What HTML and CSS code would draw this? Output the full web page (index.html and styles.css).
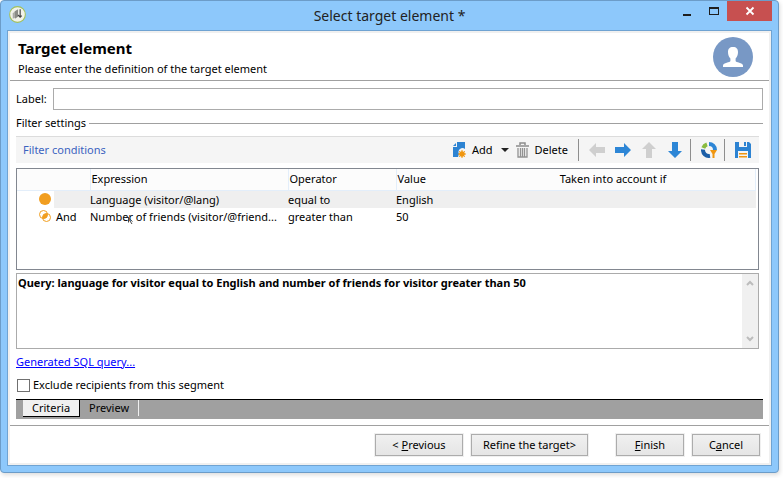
FILE: index.html
```html
<!DOCTYPE html>
<html lang="en">
<head>
<meta charset="utf-8">
<title>Select target element</title>
<link rel="stylesheet" href="styles.css">
</head>
<body>
<div class="window">
  <header class="titlebar">
    <svg class="app-icon" viewBox="0 0 16 16" aria-hidden="true">
      <circle cx="8" cy="8" r="7.4" fill="#f1f2ea" stroke="#a3c05a"/>
      <path d="M3.500 12V7l2-2v6z" fill="#a9aaa6"/>
      <path d="M5.500 5l3-2v7l-3 2z" fill="#8a8b86"/>
      <path d="M10.500 3v7.500M8.500 8.500l2 2 1.500-1.500" fill="none" stroke="#444" stroke-width="1.100"/>
    </svg>
    <h1 class="window-title">Select target element *</h1>
    <div class="window-controls">
      <button class="win-btn minimize" aria-label="Minimize"><svg viewBox="0 0 10 10"><path d="M1 8h8v2H1z" fill="#1e1e1e"/></svg></button>
      <button class="win-btn maximize" aria-label="Maximize"><svg viewBox="0 0 10 10"><path d="M0 1h10v8H0zM1 3v5h8V3z" fill="#1e1e1e" fill-rule="evenodd"/></svg></button>
      <button class="win-btn close" aria-label="Close"><svg viewBox="0 0 10 10"><path d="M1.500 1.500l7 7M8.500 1.500l-7 7" stroke="#fff" stroke-width="1.800"/></svg></button>
    </div>
  </header>
  <main class="dialog">
    <section class="intro">
      <div>
        <h2>Target element</h2>
        <p>Please enter the definition of the target element</p>
      </div>
      <svg class="avatar" viewBox="0 0 40 40" aria-hidden="true">
        <circle cx="20" cy="20" r="20" fill="#7898c5"/>
        <path d="M20 10c-3.500 0-5 2-5 5 0 3 .9 5 2.400 6.400v2.600c0 1.400-7.400 1.700-7.400 4.500V30h20v-1.500c0-2.800-7.400-3.100-7.400-4.500v-2.600c1.500-1.400 2.400-3.400 2.400-6.400 0-3-1.500-5-5-5z" fill="#fff"/>
      </svg>
    </section>
    <div class="body">
      <div class="label-row">
        <label for="label">Label:</label>
        <input type="text" id="label">
      </div>
      <div class="group-title"><span>Filter settings</span></div>
      <div class="toolbar">
        <span class="toolbar-title">Filter conditions</span>
        <button class="tool"><svg viewBox="0 0 16 16"><path d="M5 0h8v7a4 4 0 0 0-6 5l-1 3H1V5h4z" fill="#2d83d2"/><path d="M1 4l3-3v3z" fill="#2d83d2"/><circle cx="10" cy="12" r="2.800" fill="#f0960f"/><path d="M10 8v8M6 12h8M7.200 9.200l5.600 5.600M12.800 9.200l-5.600 5.600" stroke="#f0960f"/></svg>Add</button>
        <button class="tool more" aria-label="More add options"><svg viewBox="0 0 8 4"><path d="M0 0h8L4 4z" fill="#222"/></svg></button>
        <button class="tool delete"><svg viewBox="0 0 16 16"><path d="M5 3V1h5v2M1 4h13" fill="none" stroke="#8c8c8c" stroke-width="1.500"/><path d="M3 6v9h9V6M5.500 6v9M7.500 6v9M9.500 6v9" fill="none" stroke="#929292" stroke-width="1.300"/></svg>Delete</button>
        <span class="divider"></span>
        <button class="tool icon" aria-label="Left"><svg viewBox="0 0 16 16"><path d="M0 8l7-7v4h9v6H7v4z" fill="#cfcfcf"/></svg></button>
        <button class="tool icon" aria-label="Right"><svg viewBox="0 0 16 16"><path d="M16 8L9 1v4H0v6h9v4z" fill="#2d86d6"/></svg></button>
        <button class="tool icon" aria-label="Up"><svg viewBox="0 0 16 16"><path d="M8 0l7 7h-4v9H5V7H1z" fill="#cfcfcf"/></svg></button>
        <button class="tool icon" aria-label="Down"><svg viewBox="0 0 16 16"><path d="M8 16l7-7h-4V0H5v9H1z" fill="#2d86d6"/></svg></button>
        <span class="divider"></span>
        <button class="tool icon" aria-label="Distribution"><svg viewBox="0 0 16 16"><g fill="none" stroke-width="4"><path d="M8 2a6 6 0 0 1 6 6" stroke="#2d86d6"/><path d="M2.300 6A6 6 0 0 1 6 2.300" stroke="#89bb40"/><path d="M2 7.500a6 6 0 0 0 7 6.400" stroke="#1c5fa8"/></g><path d="M9 8h7l-2.500 4v4h-2v-4z" fill="#f0960f"/></svg></button>
        <span class="divider"></span>
        <button class="tool icon" aria-label="Save"><svg viewBox="0 0 16 16"><path d="M0 0h4v5h8V0h2l2 2v14h-3V9H3v7H0zM9 0h2v4H9z" fill="#2d83d2"/><path d="M4 11h8v1.500H4zM4 14h8v1.500H4z" fill="#f0960f"/></svg></button>
      </div>
      <div class="conditions">
        <table>
          <colgroup><col class="c-icon"><col class="c-join"><col class="c-expr"><col class="c-op"><col class="c-val"><col></colgroup>
          <thead><tr><th colspan="2"></th><th>Expression</th><th>Operator</th><th>Value</th><th class="center">Taken into account if</th></tr></thead>
          <tbody>
            <tr class="selected"><td class="mark"><svg viewBox="0 0 12 12"><circle cx="6" cy="6" r="6" fill="#f19e20"/></svg></td><td></td><td>Language (visitor/@lang)</td><td>equal to</td><td>English</td><td></td></tr>
            <tr><td class="mark"><svg viewBox="0 0 12 12"><g fill="none" stroke="#f19e20"><circle cx="4.500" cy="4.500" r="4"/><circle cx="7.500" cy="7.500" r="4"/></g><path d="M8.500 3.600A4 4 0 0 1 3.600 8.500 4 4 0 0 1 8.500 3.600z" fill="#f19e20"/></svg></td><td>And</td><td class="pointed">Number of friends (visitor/@friend...<svg class="cursor" viewBox="0 0 5 7" aria-hidden="true"><path d="M.5 0v5.500M.5 1l4 3.500M2 4l2 3" fill="none" stroke="#444"/></svg></td><td>greater than</td><td>50</td><td></td></tr>
          </tbody>
        </table>
      </div>
      <div class="query">
        <p>Query: language for visitor equal to English and number of friends for visitor greater than 50</p>
        <div class="scrollbar">
          <svg viewBox="0 0 8 6"><path d="M1 5l3-3 3 3" fill="none" stroke="#bcbcbc" stroke-width="2"/></svg>
          <svg viewBox="0 0 8 6"><path d="M1 1l3 3 3-3" fill="none" stroke="#bcbcbc" stroke-width="2"/></svg>
        </div>
      </div>
      <a class="sql" href="#sql">Generated SQL query...</a>
      <label class="exclude"><input type="checkbox">Exclude recipients from this segment</label>
      <nav class="tabs">
        <button class="tab active">Criteria</button>
        <button class="tab">Preview</button>
      </nav>
    </div>
    <footer class="actions">
      <button class="btn">&lt; <u>P</u>revious</button>
      <button class="btn wide">Refine the target&gt;</button>
      <button class="btn narrow apart"><u>F</u>inish</button>
      <button class="btn narrow">C<u>a</u>ncel</button>
    </footer>
  </main>
</div>
</body>
</html>
```
FILE: styles.css
```css
* { box-sizing: border-box; }
html, body { height: 100%; }
body {
  margin: 0;
  padding: 0 4px 5px 0;
  background: #fff;
  color: #000;
  font: 11px/16px "Noto Sans", "Open Sans", sans-serif;
}
button, input { font: inherit; color: inherit; }
button { padding: 0; border: 0; background: none; }
h1, h2, p { margin: 0; font-weight: normal; }
svg { display: block; flex: none; }

.window {
  display: flex;
  flex-direction: column;
  min-height: 100%;
  padding: 0 6px 6px;
  border: 1px solid #6c9cc8;
  border-radius: 4px;
  background: #8dc8fb;
  box-shadow: 1px 2px 4px #ddd;
}
.titlebar {
  display: grid;
  grid-template-columns: 1fr auto 1fr;
  align-items: start;
  height: 29px;
}
.app-icon { width: 17px; height: 17px; margin: 5px 0 0 2px; }
.window-title { padding-top: 5px; font-size: 14px; line-height: 20px; color: #222; }
.window-controls { display: flex; justify-content: flex-end; }
.win-btn { display: flex; align-items: center; justify-content: center; width: 27px; height: 20px; }
.win-btn svg { width: 10px; height: 10px; }
.win-btn.close { width: 45px; background: #c75050; }

.dialog {
  flex: 1;
  display: flex;
  flex-direction: column;
  border: 1px solid #6fa3d2;
  outline: 2px solid #f0f0f0;
  outline-offset: -3px;
  padding: 2px;
  background: #fff;
}
.intro {
  display: flex;
  justify-content: space-between;
  height: 48px;
  padding: 4px 16px 0 8px;
  border-bottom: 1px solid #a0a0a0;
}
.intro h2 { padding-bottom: 2px; font-size: 15px; line-height: 22px; font-weight: bold; }
.avatar { width: 40px; height: 40px; }
.body { padding: 7px 6px 0; }
.label-row { display: flex; align-items: center; gap: 6px; }
.label-row input { flex: 1; min-width: 0; height: 22px; border: 1px solid #ababab; padding: 0 4px; background: #fff; }
.group-title { display: flex; align-items: center; gap: 3px; margin-top: 5px; }
.group-title::after { content: ""; flex: 1; height: 1px; background: #a0a0a0; }

.toolbar {
  display: flex;
  align-items: center;
  height: 27px;
  margin: 5px 4px 0 0;
  padding: 0 3px 0 7px;
  border-top: 1px solid #dcdcdc;
  background: #f5f5f5;
}
.toolbar-title { flex: 1; color: #3b62c0; }
.tool { display: flex; align-items: center; gap: 4px; }
.tool svg { width: 16px; height: 16px; }
.tool.more { padding: 0 6px 0 8px; }
.tool.more svg { width: 8px; height: 4px; }
.tool.icon { padding: 0 5px; }
.tool.delete { padding-right: 8px; }
.divider { width: 1px; height: 22px; margin: 0 5px 0 2px; background: #8e8e8e; }

.conditions { height: 102px; margin: 5px 4px 0 0; border: 1px solid #828790; padding-right: 2px; }
table { width: 100%; table-layout: fixed; border-collapse: collapse; }
.c-icon { width: 37px; }
.c-join { width: 36px; }
.c-expr { width: 198px; }
.c-op { width: 108px; }
.c-val { width: 114px; }
th { height: 21px; padding: 0 1px; text-align: left; font-weight: normal; background: #fcfcfc; border-right: 1px solid #e3eefa; border-bottom: 1px solid #e3eefa; }
th.center { text-align: center; padding-right: 40px; }
th:nth-child(4) { border-right: 0; }
td { height: 17px; padding: 0; line-height: 17px; white-space: nowrap; }
td:nth-child(2) { padding-left: 2px; }
.selected td:not(.mark) { background: #efefef; }
.mark svg { width: 12px; height: 12px; margin-left: 22px; }
.pointed { position: relative; }
.cursor { position: absolute; left: 38px; top: 9px; width: 5px; height: 7px; }

.query { display: flex; height: 76px; margin: 3px 4px 0 0; border: 1px solid #ababab; }
.query p { flex: 1; padding: 1px; font-weight: bold; }
.scrollbar { display: flex; flex-direction: column; justify-content: space-between; align-items: center; width: 16px; padding: 6px 0; background: #f0f0f0; }
.scrollbar svg { width: 8px; height: 6px; }
.sql { display: block; width: fit-content; margin-top: 5px; color: #00f; }
.exclude { display: flex; align-items: center; gap: 3px; width: fit-content; margin-top: 7px; }
.exclude input { appearance: none; width: 13px; height: 13px; margin: 0 0 0 1px; border: 1px solid #707070; background: #fff; }
.tabs { display: flex; height: 20px; margin-top: 6px; padding-left: 7px; border-top: 1px solid #000; background: #a0a0a0; }
.tab { height: 16px; padding: 0 9px; border-right: 1px solid #f0f0f0; }
.tab.active { height: 17px; background: #f0f0f0; border-right: 1px solid #000; border-bottom: 1px solid #000; }

.actions { display: flex; justify-content: flex-end; gap: 8px; margin-top: 6px; padding: 8px 9px 7px; border-top: 1px solid #a0a0a0; }
.btn { width: 88px; height: 22px; border: 1px solid #acacac; outline: 1px solid #f0f0f0; background: linear-gradient(#f0f0f0, #e5e5e5); }
.btn.wide { width: 117px; }
.btn.narrow { width: 68px; }
.btn.apart { margin-left: 20px; }
```
